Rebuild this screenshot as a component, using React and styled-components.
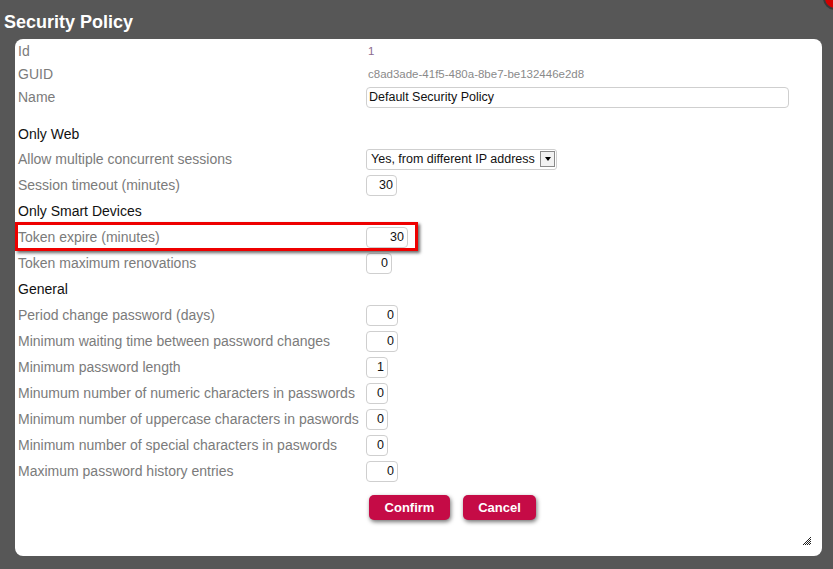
import React from "react";
import styled, { createGlobalStyle } from "styled-components";

const GlobalStyle = createGlobalStyle`
  body {
    margin: 0;
    background: #575757;
    font-family: "Liberation Sans", Arial, sans-serif;
    overflow: hidden;
  }
`;

const Page = styled.div`
  position: relative;
  width: 833px;
  height: 569px;
`;

const Title = styled.h1`
  margin: 0;
  padding: 12px 0 0 4px;
  height: 39px;
  box-sizing: border-box;
  font-size: 18px;
  line-height: 20px;
  font-weight: bold;
  color: #ffffff;
`;

const CloseButton = styled.div`
  position: absolute;
  right: -14px;
  top: -14px;
  width: 20px;
  height: 20px;
  border-radius: 50%;
  background: #d50000;
  border: 2px solid #3a3a3a;
`;

const Panel = styled.div`
  position: relative;
  margin-left: 15px;
  width: 807px;
  height: 517px;
  box-sizing: border-box;
  padding: 0 3px;
  background: #ffffff;
  border-radius: 8px;
`;

const Row = styled.div`
  display: grid;
  grid-template-columns: 348px 1fr;
  align-items: center;
  height: ${(p) => p.h || 26}px;
`;

const Label = styled.span`
  font-size: 14px;
  color: ${(p) => (p.section ? "#111111" : "#7b7b7b")};
`;

const Value = styled.span`
  padding-left: 2px;
  font-size: 11.5px;
  color: ${(p) => p.color || "#8a8a8a"};
`;

const Spacer = styled.div`
  height: ${(p) => p.h}px;
`;

const TextInput = styled.input`
  width: ${(p) => p.w}px;
  height: 21px;
  box-sizing: border-box;
  margin: 0;
  padding: 0 ${(p) => (p.left ? "0 0 2px" : "3px 0 0")};
  border: 1px solid #cfcfcf;
  border-radius: 4px;
  background: #ffffff;
  font-family: "Liberation Sans", Arial, sans-serif;
  font-size: 12.5px;
  color: #111111;
  text-align: ${(p) => (p.left ? "left" : "right")};
  outline: none;
`;

const SelectBox = styled.div`
  width: 191px;
  height: 21px;
  box-sizing: border-box;
  display: flex;
  align-items: center;
  justify-content: space-between;
  padding: 0 1px 0 4px;
  border: 1px solid #cfcfcf;
  border-radius: 3px;
  font-size: 12.5px;
  color: #111111;
`;

const SelectArrow = styled.span`
  width: 15px;
  height: 16px;
  box-sizing: border-box;
  display: flex;
  align-items: center;
  justify-content: center;
  border: 1px solid #8a8a8a;
  background: #f2f2f2;
  &::after {
    content: "";
    border-left: 3px solid transparent;
    border-right: 3px solid transparent;
    border-top: 4px solid #000000;
  }
`;

const Buttons = styled.div`
  display: flex;
  gap: 13px;
  margin: 11px 0 0 351px;
`;

const Button = styled.button`
  width: ${(p) => p.w}px;
  height: 25px;
  border: none;
  border-radius: 5px;
  background: #c50b46;
  color: #ffffff;
  font-family: "Liberation Sans", Arial, sans-serif;
  font-size: 13px;
  font-weight: bold;
  box-shadow: 1px 2px 4px rgba(0, 0, 0, 0.55);
  cursor: pointer;
`;

const Highlight = styled.div`
  position: absolute;
  left: 0;
  top: 183px;
  width: 403px;
  height: 29px;
  box-sizing: border-box;
  border: 3px solid #ee0000;
  box-shadow: 2px 2px 3px rgba(0, 0, 0, 0.6);
  pointer-events: none;
`;

const Grip = styled.svg`
  position: absolute;
  right: 11px;
  bottom: 11px;
`;

const numberFields = [
  { label: "Period change password (days)", value: "0", w: 32 },
  { label: "Minimum waiting time between password changes", value: "0", w: 32 },
  { label: "Minimum password length", value: "1", w: 22 },
  { label: "Minumum number of numeric characters in passwords", value: "0", w: 22 },
  { label: "Minimum number of uppercase characters in paswords", value: "0", w: 22 },
  { label: "Minimum number of special characters in paswords", value: "0", w: 22 },
  { label: "Maximum password history entries", value: "0", w: 32 },
];

const App = () => {
  return (
    <Page>
      <GlobalStyle />
      <Title>Security Policy</Title>
      <CloseButton />
      <Panel>
        <Row h={23}>
          <Label>Id</Label>
          <Value color="#8d6b8d">1</Value>
        </Row>
        <Row h={23}>
          <Label>GUID</Label>
          <Value>c8ad3ade-41f5-480a-8be7-be132446e2d8</Value>
        </Row>
        <Row h={24}>
          <Label>Name</Label>
          <TextInput w={423} left defaultValue="Default Security Policy" />
        </Row>
        <Spacer h={13} />
        <Row h={24}>
          <Label section>Only Web</Label>
        </Row>
        <Row>
          <Label>Allow multiple concurrent sessions</Label>
          <SelectBox>
            Yes, from different IP address
            <SelectArrow />
          </SelectBox>
        </Row>
        <Row>
          <Label>Session timeout (minutes)</Label>
          <TextInput w={31} defaultValue="30" />
        </Row>
        <Row>
          <Label section>Only Smart Devices</Label>
        </Row>
        <Row>
          <Label>Token expire (minutes)</Label>
          <TextInput w={42} defaultValue="30" />
        </Row>
        <Row>
          <Label>Token maximum renovations</Label>
          <TextInput w={26} defaultValue="0" />
        </Row>
        <Row>
          <Label section>General</Label>
        </Row>
        {numberFields.map((f) => (
          <Row key={f.label}>
            <Label>{f.label}</Label>
            <TextInput w={f.w} defaultValue={f.value} />
          </Row>
        ))}
        <Buttons>
          <Button w={81}>Confirm</Button>
          <Button w={73}>Cancel</Button>
        </Buttons>
        <Highlight />
        <Grip width="8" height="8" viewBox="0 0 8 8">
          {[0, 1, 2, 3, 4, 5, 6, 7].map((y) =>
            [0, 1, 2, 3, 4, 5, 6, 7]
              .filter((x) => x + y >= 7 && (x + y) % 2 === 1)
              .map((x) => <rect key={`${x}-${y}`} x={x} y={y} width="1" height="1" fill="#222" />)
          )}
        </Grip>
      </Panel>
    </Page>
  );
};

export default App;
